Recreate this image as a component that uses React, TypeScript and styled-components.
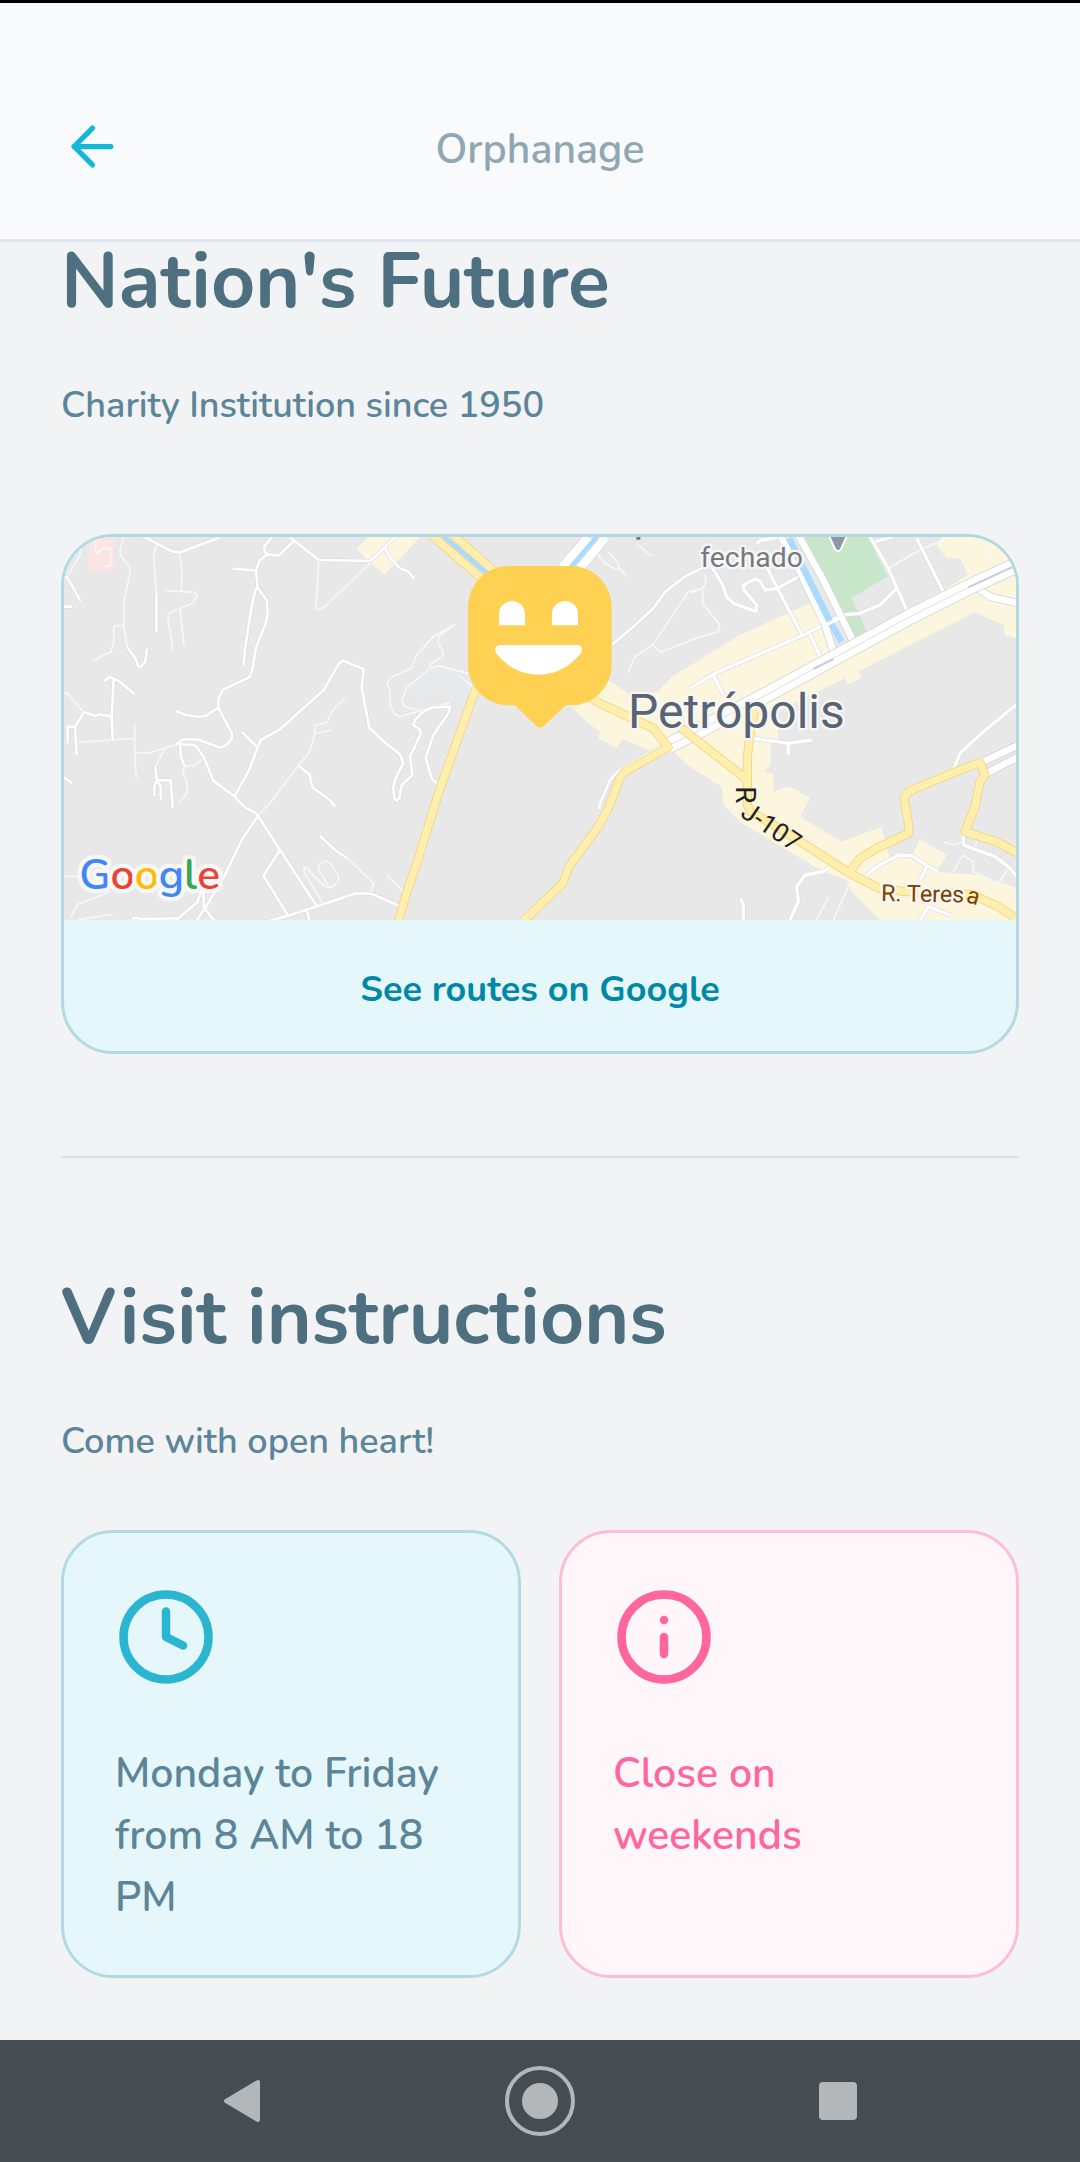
import React from "react";
import styled, { createGlobalStyle } from "styled-components";
import { ArrowLeft } from "lucide-react";

const GlobalStyle = createGlobalStyle`
  *, *::before, *::after { box-sizing: border-box; }
  body {
    margin: 0;
    background: #f2f3f5;
    font-family: Nunito, "Open Sans", "Noto Sans", sans-serif;
    font-weight: 600;
  }
  button { font: inherit; border: 0; padding: 0; cursor: pointer; background: none; }
`;

const Screen = styled.div`
  display: flex;
  flex-direction: column;
  min-height: 100vh;
`;

const Header = styled.header`
  display: grid;
  grid-template-columns: 63px 1fr 63px;
  align-items: center;
  padding: 107px 61px 57px;
  border-top: 3px solid #000;
  border-bottom: 3px solid #dde3f0;
  background: #f9fafc;
`;

const BackButton = styled.button`
  display: flex;
  color: #15b6d6;
`;

const HeaderTitle = styled.span`
  padding-top: 8px;
  color: #8fa7b3;
  font-size: 41px;
  line-height: 64px;
  text-align: center;
`;

const Content = styled.main`
  flex: 1;
  padding: 0 61px 62px;
`;

const Title = styled.h1`
  margin: 0 0 52px;
  color: #4d6f80;
  font-size: 77px;
  font-weight: 700;
  line-height: 80px;
`;

const Description = styled.p`
  margin: 0;
  color: #5c8599;
  font-size: 36px;
  line-height: 64px;
`;

const MapCard = styled.section`
  margin: 96px 0 102px;
  border: 3px solid #b3dae2;
  border-radius: 52px;
  background: #e6f7fb;
  overflow: hidden;
`;

const MapImage = styled.svg`
  display: block;
  width: 100%;
  background: #e8e8e8;
`;

const MapLabel = styled.text<{ $plain?: boolean }>`
  font-family: Roboto, sans-serif;
  font-weight: 400;
  paint-order: stroke;
  stroke: ${(p) => (p.$plain ? "none" : "#f7f7f7")};
  stroke-width: 14px;
  stroke-linejoin: round;
`;

const GoogleMark = styled.text`
  font-family: Nunito, sans-serif;
  font-size: 128px;
  font-weight: 600;
  paint-order: stroke;
  stroke: #f7f7f7;
  stroke-width: 26px;
  stroke-linejoin: round;
`;

const RoutesLink = styled.a`
  display: block;
  padding: 38px 0 29px;
  color: #0089a5;
  font-size: 36px;
  font-weight: 700;
  line-height: 64px;
  text-align: center;
  text-decoration: none;
`;

const Divider = styled.hr`
  margin: 0 0 120px;
  border: 0;
  border-top: 2px solid #d3e2e6;
`;

const Schedule = styled.div`
  display: grid;
  grid-template-columns: 1fr 1fr;
  gap: 38px;
  margin-top: 56px;
`;

const ScheduleItem = styled.div<{ $tone: "blue" | "pink" }>`
  padding: 53px 51px 29px;
  border: 3px solid ${(p) => (p.$tone === "blue" ? "#b3dae2" : "#ffbcd4")};
  border-radius: 52px;
  background: ${(p) => (p.$tone === "blue" ? "#e6f7fb" : "#fef6f9")};
  color: ${(p) => (p.$tone === "blue" ? "#5c8599" : "#ff669d")};
`;

const ItemIcon = styled.svg`
  display: block;
  width: 102px;
  height: 102px;
  fill: none;
  stroke-width: 2;
  stroke-linecap: round;
  stroke-linejoin: round;
`;

const ItemText = styled.p`
  margin: 55px 0 17px;
  font-size: 41px;
  line-height: 62px;
`;

const NavBar = styled.nav`
  display: grid;
  grid-template-columns: repeat(3, 1fr);
  height: 122px;
  padding: 0 93px;
  background: #454d53;
`;

const NavButton = styled.button`
  display: flex;
  align-items: center;
  justify-content: center;
  color: #b3b7b9;
`;

const minorRoads = [
  "M92 70L90 90L52 155M318 60L311 95L319 205M42 503L52 505L102 562",
  "M220 36L209 80L216 98L240 126L238 155L221 230V302L232 367M221 302H196L191 308V350L183 382L160 390L130 408",
  "M387 83L396 132L394 200M346 197L435 202L441 212L430 233L358 265L353 272L368 375M390 252L402 360",
  "M806 105L798 250L806 256L825 245L962 112M80 652L254 640M254 598V684L259 760M254 684H295L378 660M345 668L318 722",
  "M462 700L430 722L404 724L398 738L412 778V802L388 832M624 872L665 828L745 722L780 678L794 625V602L830 593L853 548L886 520M794 625L847 615",
  "M42 1054H110M60 1182L82 1138L180 1100M85 1184L190 1168M137 36V80L143 84L158 71H182V122L163 126M892 1000L970 1073L962 1106",
  "M820 1138L762 1040V1028L770 1030L825 1085L843 1088L865 1072V1052L843 1018L828 1008L808 1018L804 1030L838 1088",
];

const minorRoadsCentre = [
  "M255 298L190 335L140 390L126 428L62 458L52 478L60 498V540L75 568L92 575L140 560L240 533",
  "M255 298L208 332L203 352L218 378V395L180 418V430L110 488L95 525L105 545L140 555L240 545M180 430L205 422L295 445M272 455L303 482V525",
  "M0 1065L12 1075L0 1108M52 1052L102 1102M683 88L705 115L735 132L748 130L742 112L715 80M748 130L772 155M800 55L845 95",
  "M990 192L955 200L848 360L872 382L990 335M848 360L795 395L773 443",
];

const minorRoadsEast = [
  "M45 150L48 170L38 190V235L90 300L85 320L0 345M0 205L38 190M595 130L690 75L780 36M870 40L905 115",
  "M762 952L795 960L820 950V930M818 990L790 1040M818 990L850 1010V1040L925 1075L955 1030M860 950L855 970",
  "M482 1068L430 1186M415 1118L378 1186",
];

const streets = [
  "M280 34L360 77L387 83L508 38M668 34L642 65L644 80L652 88L685 92L733 47L718 34M733 47L806 105L962 108L1035 36",
  "M652 88L628 108L618 138L623 188L650 226L653 268L646 298L618 368L606 438L597 457L518 495L505 522V548L545 624V640Q530 668 508 667L440 643H400L378 658",
  "M548 131L618 137M623 188L616 195L605 245L585 370L581 420M505 548L470 571L450 576L408 570L378 558",
  "M378 657L430 660L440 666L462 698L490 767L553 814L585 848L612 861L624 872L690 975L800 1143",
  "M553 814L595 740L632 645L690 613L820 496L868 414L880 407L941 433L935 488L958 608L1002 650L1050 688L1060 715L1038 757L1030 785L1033 820L1040 827L1048 820L1055 780L1087 750L1080 695L1113 625L1108 612L1090 600L1095 585L1120 560L1145 548L1200 545L1195 565L1150 630L1127 698L1145 760L1165 780",
  "M575 620L622 667M745 722L778 748L787 787L840 825L855 845M624 872L575 945L525 1050L465 1150L440 1186",
  "M460 1090L462 1148L492 1186M455 1095L442 1132L385 1180L270 1182L258 1178L246 1182M690 975L640 1052L713 1170M650 1190L713 1172L820 1138L918 1105L963 1106L1048 1142M770 1155L778 1186",
  "M810 933L855 975L892 1000M42 157L52 157L92 229M42 245H66M232 367L257 402L265 424L274 424L286 410L291 370M319 205V320",
  "M163 468L178 456L206 467L254 508M191 465L185 575L188 648M185 575L146 568L138 573L102 562L75 605L80 690M75 605H53V655",
  "M390 658L393 695L404 725M42 757L66 775M316 725L320 765L332 785L333 825M320 768Q310 780 313 813M320 765L362 766L368 848",
  "M1005 68L1020 98L1050 130L1075 140L1092 160M1965 125L1905 155L1848 198L1810 250L1750 305L1685 360M1830 665L1705 738L1680 765L1648 840V852",
];

const streetsEast = [
  "M230 125L262 190L335 328M325 155L262 190L225 195L210 168L195 162L160 180L162 195L200 240L198 260L130 235L110 215L98 180L65 125",
  "M200 55L215 45L270 36M0 490L75 445L345 328L400 300L455 270L510 265L570 240L620 190M70 450L100 510M360 328L388 390",
  "M540 36L595 130L650 255M680 40L760 200M555 50L610 36M190 640L295 655L365 645M295 655V690",
  "M985 535L880 620L810 685L790 735M520 1060L560 1025L625 990L665 992L712 1022L745 1040M712 1022L690 1065M820 960L915 995L955 1025L985 1060M820 930V960",
  "M415 1030L400 1040L345 1050L320 1085L325 1130L300 1186M152 1122L160 1140V1186M690 1186L715 1145L780 1170",
];

const highway = "M-65 662L40 610L210 520L430 400L660 275L850 180L985 118";
const avenues =
  "M270 30L330 140L405 300L430 380M325 30L400 165L490 350M850 180L900 215L985 235M870 715L985 660M880 750L985 695";
const yellowRoads = [
  "M1145 30L1340 200M1200 22L1380 180M1278 490L1235 610L1170 790L1102 1010L1068 1110L1045 1190",
  "M1600 505L1650 535L1810 610L1845 655L1855 666L1725 740L1710 758L1675 850L1645 905L1560 1020L1538 1075L1420 1188",
  "M2115 555L2098 640L2092 700V840L2102 860L2180 905L2400 1045L2485 1090L2570 1100L2720 1105L2770 1110L2845 1145L2905 1185M1892 608L2080 755L2092 770",
  "M2400 1040L2430 1000L2480 970L2575 925L2577 905L2562 820L2575 800L2705 745L2790 712L2805 750L2790 770L2775 845L2745 920L2840 950L2905 985",
];

type RoadProps = { paths: string[]; color: string; edge: string; width: number; edgeWidth: number };

/* A road is a wide edge line with a narrower surface line over it. */
function Roads({ paths, color, edge, width, edgeWidth }: RoadProps) {
  const d = paths.join("");
  return (
    <g fill="none" strokeLinejoin="round">
      <path d={d} stroke={edge} strokeWidth={edgeWidth} />
      <path d={d} stroke={color} strokeWidth={width} />
    </g>
  );
}

function CityMap() {
  return (
    <MapImage viewBox="42 36 2856 1149" role="img" aria-label="Map of Petrópolis">
      <path d="M120 75L135 36H192V125Q185 138 175 140H120Q112 138 114 115Z" fill="#fce4e2" />
      <path d="M955 36H1110L1005 148L968 120L945 98L920 72Z" fill="#fdf6df" />
      <path d="M1082 488L1140 430L1170 422L1280 450L1278 565L1235 545L1192 514L1145 515L1110 528Z" fill="#e6eaed" />
      <g transform="translate(1920)">
        <path
          d="M-360 540L-245 465L-180 510L-98 500L-55 455L0 422L150 330L360 235L440 380L530 320L760 195L835 150L810 100L770 100L740 60L755 36H985V340L945 330L940 300L855 262L740 320L640 370L505 440L515 458L475 478L465 460L260 560L265 645L242 655V718L220 740L250 745V800L285 785L310 790L360 820L330 875L455 950L575 905L600 1000L670 985L690 942L770 990L740 1040L860 1050L985 1090V1186H570L485 1100L475 1068L390 1035L150 890L100 840L95 785L0 725L-65 665L-115 680L-200 642L-220 670L-275 640L-270 620L-310 590Z"
          fill="#fdf6df"
        />
        <path d="M330 36H535L592 155L485 218L530 318L490 340Z" fill="#c8e6c9" />
      </g>
      <g fill="none" stroke="#f7f7f7" strokeWidth="5">
        <path d={minorRoads.join("")} />
        <path d={minorRoadsCentre.join("")} transform="translate(960)" />
        <path d={minorRoadsEast.join("")} transform="translate(1920)" />
      </g>
      <Roads paths={streets} color="#fff" edge="#dcdde1" width={8} edgeWidth={12} />
      <path d="M1615 36L1535 128M1668 36L1590 130" stroke="#d4d5d8" strokeWidth="30" />
      <path d="M1615 36L1535 128M1668 36L1590 130" stroke="#fff" strokeWidth="26" />
      <path d="M1640 36L1560 130" stroke="#aadaff" strokeWidth="14" />
      <g transform="translate(1920)">
        <Roads paths={streetsEast} color="#fff" edge="#dcdde1" width={10} edgeWidth={14} />
        <Roads paths={[avenues]} color="#fff" edge="#d4d5d8" width={20} edgeWidth={25} />
        <path d="M298 40L340 130L420 290L455 350" fill="none" stroke="#aadaff" strokeWidth="20" />
        <path d="M398 305L455 275" stroke="#fff" strokeWidth="10" />
        <Roads paths={[highway]} color="#fff" edge="#d4d5d8" width={44} edgeWidth={49} />
        <path d={highway} fill="none" stroke="#dedede" strokeWidth="3" />
        <path d="M370 432L430 402M835 187L985 118" stroke="#c3cddb" strokeWidth="6" />
      </g>
      <Roads paths={yellowRoads} color="#ffefaf" edge="#f5d27a" width={22} edgeWidth={27} />
      <path d="M1180 34L1320 152" stroke="#aadaff" strokeWidth="14" />

      <g transform="translate(1920)">
        <path d="M416 30H472L452 74Q444 82 436 74Z" fill="#9196a3" stroke="#fff" strokeWidth="6" />
        <path d="M-155 34V44" stroke="#777" strokeWidth="12" />
        <MapLabel x="31" y="125" fontSize="85" fill="#747a80">fechado</MapLabel>
        <MapLabel x="-186" y="608" fontSize="144" fill="#5a6470">Petrópolis</MapLabel>
        <MapLabel $plain transform="translate(139 784) rotate(90)" fontSize="84" fill="#222" fontWeight="500">R</MapLabel>
        <MapLabel $plain transform="translate(148 872) rotate(34)" fontSize="78" fill="#222">J-107</MapLabel>
        <MapLabel transform="translate(573 1128) rotate(1)" fontSize="70" fill="#7a4100">R. Teres</MapLabel>
        <MapLabel $plain transform="translate(826 1130) rotate(16)" fontSize="70" fill="#7a4100">a</MapLabel>
      </g>

      <GoogleMark x="88" y="1092">
        <tspan fill="#4285f4">G</tspan>
        <tspan fill="#ea4335">o</tspan>
        <tspan fill="#fbbc05">o</tspan>
        <tspan fill="#4285f4">g</tspan>
        <tspan fill="#34a853">l</tspan>
        <tspan fill="#ea4335">e</tspan>
      </GoogleMark>

      <g transform="translate(960)">
        <rect x="294" y="123" width="431" height="418" rx="122" fill="#ffd152" />
        <path d="M433 539L498 602Q510 614 522 602L589 539Z" fill="#ffd152" />
        <g fill="#fff">
          <path d="M387 301V267a39 39 0 0 1 78 0V301Z" />
          <path d="M546 301V267a39 39 0 0 1 78 0V301Z" />
          <path d="M390 360H622Q642 363 634 384Q580 449 505 449Q430 449 377 384Q370 363 390 360Z" />
        </g>
      </g>
    </MapImage>
  );
}

export default function App() {
  return (
    <Screen>
      <GlobalStyle />
      <Header>
        <BackButton aria-label="Back">
          <ArrowLeft size={63} strokeWidth={2} />
        </BackButton>
        <HeaderTitle>Orphanage</HeaderTitle>
      </Header>

      <Content>
        <Title>Nation's Future</Title>
        <Description>Charity Institution since 1950</Description>

        <MapCard>
          <CityMap />
          <RoutesLink href="#routes">See routes on Google</RoutesLink>
        </MapCard>

        <Divider />

        <Title as="h2">Visit instructions</Title>
        <Description>Come with open heart!</Description>

        <Schedule>
          <ScheduleItem $tone="blue">
            <ItemIcon viewBox="0 0 24 24" stroke="#2ab5d1" aria-hidden="true">
              <circle cx="12" cy="12" r="10" />
              <path d="M12 6v6l4 2" />
            </ItemIcon>
            <ItemText>Monday to Friday from 8 AM to 18 PM</ItemText>
          </ScheduleItem>
          <ScheduleItem $tone="pink">
            <ItemIcon viewBox="0 0 24 24" stroke="#ff669d" aria-hidden="true">
              <circle cx="12" cy="12" r="10" />
              <path d="M12 16v-4M12 8h.01" />
            </ItemIcon>
            <ItemText>
              Close on
              <br />
              weekends
            </ItemText>
          </ScheduleItem>
        </Schedule>
      </Content>

      <NavBar>
        <NavButton aria-label="System back">
          <svg width="38" height="44" viewBox="0 0 38 44">
            <path d="M35 3V41L3 22Z" fill="currentColor" stroke="currentColor" strokeWidth="4" strokeLinejoin="round" />
          </svg>
        </NavButton>
        <NavButton aria-label="Home">
          <svg width="72" height="72" viewBox="0 0 72 72">
            <circle cx="36" cy="36" r="33" fill="none" stroke="currentColor" strokeWidth="4" />
            <circle cx="36" cy="36" r="18" fill="currentColor" />
          </svg>
        </NavButton>
        <NavButton aria-label="Recent apps">
          <svg width="38" height="38" viewBox="0 0 38 38">
            <rect width="38" height="38" rx="4" fill="currentColor" />
          </svg>
        </NavButton>
      </NavBar>
    </Screen>
  );
}
